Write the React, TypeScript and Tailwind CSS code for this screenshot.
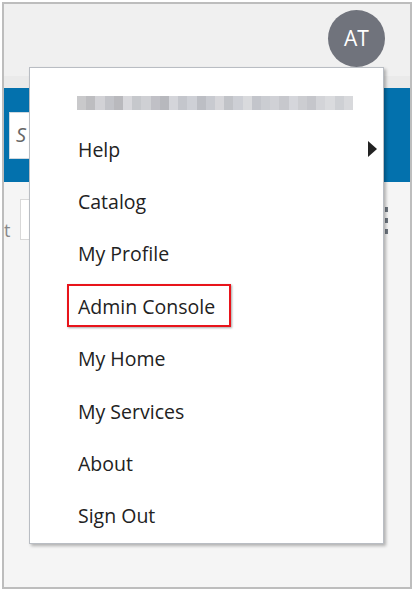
import React from "react";

const items = [
  "Help",
  "Catalog",
  "My Profile",
  "Admin Console",
  "My Home",
  "My Services",
  "About",
  "Sign Out",
];

// pixelated shades standing in for the blurred e-mail address
const shades = [
  "#c9c9cb", "#bdbdc0", "#d2d2d6", "#c2c3c8", "#b9b9bd", "#d8d8dc", "#c6c8cc",
  "#cfd0d4", "#c0c0c6", "#b7b8bd", "#d4d5da", "#c4c6cc", "#ced0d6", "#bcbec4",
  "#c8cad0", "#d6d6da", "#c1c3c8", "#cdcfd5", "#d9dadd", "#c3c5cb", "#cbcdd2",
  "#d0d1d6", "#c7c8cd", "#d5d6db", "#cccdd1", "#c5c6cb", "#d3d4d8", "#dadbde",
  "#ced0d4", "#d8d9dc",
];

function BlurredEmail() {
  return (
    <div className="flex h-[14px] w-[276px] overflow-hidden blur-[0.6px]">
      {shades.map((c, i) => (
        <span key={i} className="h-full flex-1" style={{ background: c }} />
      ))}
    </div>
  );
}

function UserMenu() {
  return (
    <div className="absolute left-[25px] top-[63px] z-10 h-[477px] w-[355px] border border-[#b9bdc3] bg-white shadow-[2px_2px_3px_rgba(0,0,0,0.28)]">
      <div className="flex h-[55px] items-end pl-[47px] pb-[13px]">
        <BlurredEmail />
      </div>
      <ul className="flex flex-col">
        {items.map((label) => (
          <li
            key={label}
            className="relative flex h-[52.4px] items-center pl-[48px] text-[19.5px] text-[#222]"
          >
            {label === "Admin Console" ? (
              <span className="relative">
                <span className="absolute -left-[11px] -right-[16px] -top-[8px] -bottom-[6px] border-2 border-[#e8141b] shadow-[1px_1px_2px_rgba(0,0,0,0.35)]" />
                {label}
              </span>
            ) : (
              label
            )}
            {label === "Help" && (
              <span className="absolute right-[6px] top-1/2 h-0 w-0 -translate-y-1/2 border-y-[8px] border-l-[9px] border-y-transparent border-l-[#222]" />
            )}
          </li>
        ))}
      </ul>
    </div>
  );
}

export default function App() {
  return (
    <div
      className="h-[591px] w-[414px] bg-white p-[2px]"
      style={{ fontFamily: '"Open Sans", "Noto Sans", sans-serif' }}
    >
      <div className="relative flex h-[587px] w-[410px] flex-col overflow-hidden border-2 border-[#bdbdbd] bg-[#f5f5f5]">
        <header className="flex h-[72px] justify-end bg-[#f0f0f0] pr-[25px] pt-[6px]">
          <div className="flex h-[57px] w-[57px] items-center justify-center rounded-full bg-[#70737c] text-[21px] text-white">
            AT
          </div>
        </header>
        <div className="h-[12px] bg-[#eaeaea]" />
        <div className="flex h-[94px] items-center bg-[#0371ad] pl-[5px]">
          <div className="flex h-[47px] w-[200px] items-center border border-[#cfd8df] bg-white pl-[6px] text-[20px] italic text-[#666]">
            S
          </div>
        </div>
        <div className="relative flex items-start pt-[17px]">
          <span className="mt-[22px] text-[18px] leading-none text-[#888]">t</span>
          <div className="ml-[10px] h-[41px] w-[150px] border border-[#d8d8d8] bg-white" />
          <div className="ml-auto mr-[22px] mt-[8px] flex flex-col gap-[6px]">
            <span className="h-[5px] w-[3px] bg-[#6f7780]" />
            <span className="h-[5px] w-[3px] bg-[#6f7780]" />
            <span className="h-[5px] w-[3px] bg-[#6f7780]" />
          </div>
        </div>
        <UserMenu />
      </div>
    </div>
  );
}
